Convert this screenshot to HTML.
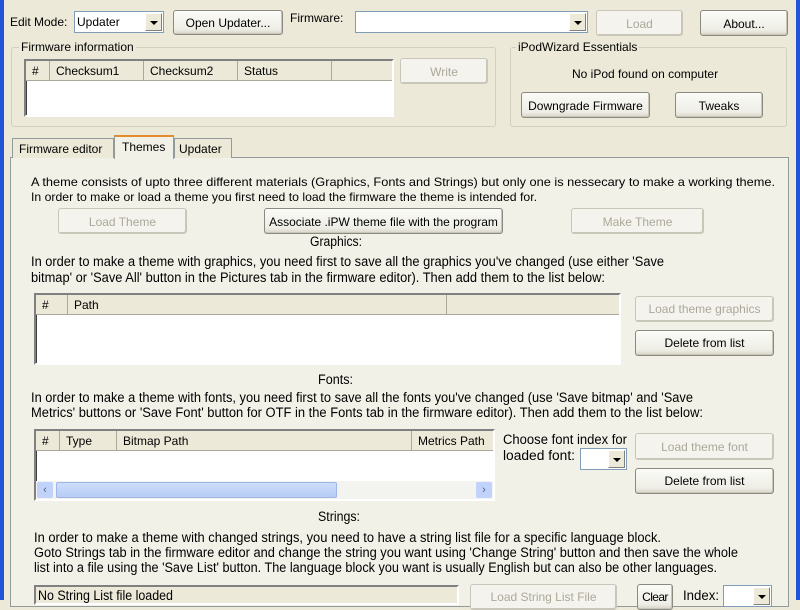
<!DOCTYPE html>
<html><head><meta charset="utf-8"><style>
*{box-sizing:border-box}
body{margin:0;width:800px;height:600px;overflow:hidden;background:#ece9d8;font-family:"Liberation Sans",sans-serif;font-size:12px;color:#000;position:relative}
.a{position:absolute}
.t{position:absolute;white-space:nowrap;line-height:14px}
.c{font-size:13.5px;line-height:15px}
.t span{display:inline-block;transform-origin:0 0}
.btn{position:absolute;background:linear-gradient(#fbfbf8,#eeede5 80%,#d8d5c8);border:1px solid #8a8a80;border-radius:3px;text-align:center;white-space:nowrap;box-shadow:inset -1px -1px 0 #c9c6b8}
.dis{color:#aca899;border-color:#c9c7ba;background:#f4f3ee}
.cmb{position:absolute;background:#fff;border:1px solid #7f9db9;}
.arr{position:absolute;right:1px;top:1px;bottom:1px;width:17px;background:#ece9d8;border:1px solid #fff;border-right-color:#808080;border-bottom-color:#808080}
.arr:after{content:"";position:absolute;left:4px;top:7px;border:4px solid transparent;border-top:4px solid #000;border-bottom:0}
.grp{position:absolute;border:1px solid #d0d0bf;border-radius:3px}
.gl{position:absolute;top:-8px;left:7px;background:#ece9d8;padding:0 2px}
.lv{position:absolute;background:#fff;border:2px solid;border-color:#808080 #fff #fff #808080;box-shadow:inset 1px 1px 0 #404040}
.hdr{position:absolute;top:0;height:20px;background:#ece9d8;border-right:1px solid #aca899;border-bottom:1px solid #aca899;padding:3px 0 0 6px;white-space:nowrap}
</style></head><body>
<div class="a" style="left:0;top:0;width:4px;height:600px;background:#1f55d6"></div>
<div class="a" style="left:796px;top:0;width:4px;height:600px;background:#1f55d6"></div>

<div class="t" style="left:10px;top:15px">Edit Mode:</div>
<div class="cmb" style="left:74px;top:11px;width:90px;height:22px"><div class="t" style="left:2px;top:3px">Updater</div><div class="arr"></div></div>
<div class="btn" style="left:173px;top:10px;width:110px;height:25px;padding-top:5px">Open Updater...</div>
<div class="t" style="left:290px;top:11px">Firmware:</div>
<div class="cmb" style="left:355px;top:11px;width:233px;height:22px"><div class="arr"></div></div>
<div class="btn dis" style="left:596px;top:10px;width:87px;height:26px;padding-top:6px">Load</div>
<div class="btn" style="left:700px;top:10px;width:88px;height:26px;padding-top:6px">About...</div>

<div class="grp" style="left:11px;top:47px;width:485px;height:80px"><div class="gl">Firmware information</div></div>
<div class="lv" style="left:24px;top:59px;width:370px;height:58px">
<div class="hdr" style="left:0;width:24px">#</div><div class="hdr" style="left:24px;width:94px">Checksum1</div><div class="hdr" style="left:118px;width:94px">Checksum2</div><div class="hdr" style="left:212px;width:94px">Status</div><div class="hdr" style="left:306px;width:60px;border-right:0"></div></div>
<div class="btn dis" style="left:400px;top:58px;width:88px;height:26px;padding-top:6px">Write</div>

<div class="grp" style="left:510px;top:47px;width:277px;height:80px"><div class="gl" style="left:5px">iPodWizard Essentials</div></div>
<div class="t" style="left:572px;top:67px">No iPod found on computer</div>
<div class="btn" style="left:521px;top:92px;width:129px;height:26px;padding-top:6px">Downgrade Firmware</div>
<div class="btn" style="left:675px;top:92px;width:88px;height:26px;padding-top:6px">Tweaks</div>

<div class="a" style="left:10px;top:157px;width:779px;height:450px;background:#f2f1e8;border:1px solid #919b9c"></div>
<div class="a" style="left:12px;top:138px;width:102px;height:20px;border:1px solid #919b9c;border-bottom:0;background:#ece9d8;padding:3px 0 0 6px">Firmware editor</div>
<div class="a" style="left:174px;top:138px;width:58px;height:20px;border:1px solid #919b9c;border-bottom:0;background:#ece9d8;padding:3px 0 0 4px">Updater</div>
<div class="a" style="left:114px;top:135px;width:60px;height:24px;border:1px solid #919b9c;border-bottom:0;border-top:2px solid #e68b2c;background:#f2f1e8;padding:3px 0 0 7px">Themes</div>

<div class="t" style="left:31px;top:175px" data-w="744"><span>A theme consists of upto three different materials (Graphics, Fonts and Strings) but only one is nessecary to make a working theme.</span></div>
<div class="t" style="left:31px;top:190px" data-w="506"><span>In order to make or load a theme you first need to load the firmware the theme is intended for.</span></div>
<div class="btn dis" style="left:58px;top:208px;width:129px;height:26px;padding-top:6px">Load Theme</div>
<div class="btn" style="left:264px;top:208px;width:239px;height:26px;padding-top:6px">Associate .iPW theme file with the program</div>
<div class="btn dis" style="left:571px;top:208px;width:133px;height:26px;padding-top:6px">Make Theme</div>

<div class="t c" style="left:310px;top:234px" data-w="52"><span>Graphics:</span></div>
<div class="t c" style="left:31px;top:254px" data-w="633"><span>In order to make a theme with graphics, you need first to save all the graphics you've changed (use either 'Save</span></div>
<div class="t c" style="left:31px;top:270px" data-w="574"><span>bitmap' or 'Save All' button in the Pictures tab in the firmware editor). Then add them to the list below:</span></div>
<div class="lv" style="left:34px;top:293px;width:587px;height:72px">
<div class="hdr" style="left:0;width:32px">#</div><div class="hdr" style="left:32px;width:379px">Path</div><div class="hdr" style="left:411px;width:172px;border-right:0"></div></div>
<div class="btn dis" style="left:635px;top:296px;width:139px;height:26px;padding-top:5px">Load theme graphics</div>
<div class="btn" style="left:635px;top:330px;width:139px;height:26px;padding-top:5px">Delete from list</div>

<div class="t c" style="left:318px;top:372px" data-w="35"><span>Fonts:</span></div>
<div class="t c" style="left:31px;top:390px" data-w="662"><span>In order to make a theme with fonts, you need first to save all the fonts you've changed (use 'Save bitmap' and 'Save</span></div>
<div class="t c" style="left:31px;top:405px" data-w="672"><span>Metrics' buttons or 'Save Font' button for OTF in the Fonts tab in the firmware editor). Then add them to the list below:</span></div>
<div class="lv" style="left:34px;top:429px;width:461px;height:72px">
<div class="hdr" style="left:0;width:24px">#</div><div class="hdr" style="left:24px;width:57px">Type</div><div class="hdr" style="left:81px;width:295px">Bitmap Path</div><div class="hdr" style="left:376px;width:81px;border-right:0">Metrics Path</div>
<div class="a" style="left:0;top:50px;width:457px;height:18px;background:#f3f3ef">
<div class="a" style="left:1px;top:1px;width:16px;height:16px;background:#c1d3fb;border-radius:2px;color:#4d6185;font-size:11px;text-align:center;line-height:16px">&lsaquo;</div>
<div class="a" style="left:20px;top:1px;width:281px;height:16px;background:linear-gradient(#cddcfb,#b7ccf5);border:1px solid #9fb5e6;border-radius:2px"></div>
<div class="a" style="left:440px;top:1px;width:16px;height:16px;background:#c1d3fb;border-radius:2px;color:#4d6185;font-size:11px;text-align:center;line-height:16px">&rsaquo;</div></div></div>
<div class="t c" style="left:503px;top:432px" data-w="124"><span>Choose font index for</span></div>
<div class="t c" style="left:503px;top:448px" data-w="72"><span>loaded font:</span></div>
<div class="cmb" style="left:580px;top:448px;width:47px;height:22px"><div class="arr"></div></div>
<div class="btn dis" style="left:635px;top:433px;width:139px;height:27px;padding-top:6px">Load theme font</div>
<div class="btn" style="left:635px;top:468px;width:139px;height:26px;padding-top:5px">Delete from list</div>

<div class="t c" style="left:318px;top:509px" data-w="42"><span>Strings:</span></div>
<div class="t c" style="left:34px;top:530px" data-w="627"><span>In order to make a theme with changed strings, you need to have a string list file for a specific language block.</span></div>
<div class="t c" style="left:34px;top:545px" data-w="704"><span>Goto Strings tab in the firmware editor and change the string you want using 'Change String' button and then save the whole</span></div>
<div class="t c" style="left:34px;top:560px" data-w="683"><span>list into a file using the 'Save List' button. The language block you want is usually English but can also be other languages.</span></div>
<div class="a" style="left:34px;top:585px;width:425px;height:20px;border:2px solid;border-color:#808080 #fff #fff #808080;background:#ece9d8"></div>
<div class="t c" style="left:38px;top:588px" data-w="135"><span>No String List file loaded</span></div>
<div class="btn dis" style="left:470px;top:584px;width:147px;height:26px;padding-top:5px">Load String List File</div>
<div class="btn" style="left:637px;top:584px;width:36px;height:26px;padding-top:5px;letter-spacing:-0.6px">Clear</div>
<div class="t c" style="left:683px;top:588px" data-w="36"><span>Index:</span></div>
<div class="cmb" style="left:723px;top:585px;width:49px;height:22px"><div class="arr"></div></div>

<script>
document.querySelectorAll('.t[data-w]').forEach(function(e){var s=e.firstElementChild;var w=s.getBoundingClientRect().width;var tw=+e.getAttribute('data-w');if(w>0)s.style.transform='scaleX('+(tw/w)+')';});
</script>
</body></html>
